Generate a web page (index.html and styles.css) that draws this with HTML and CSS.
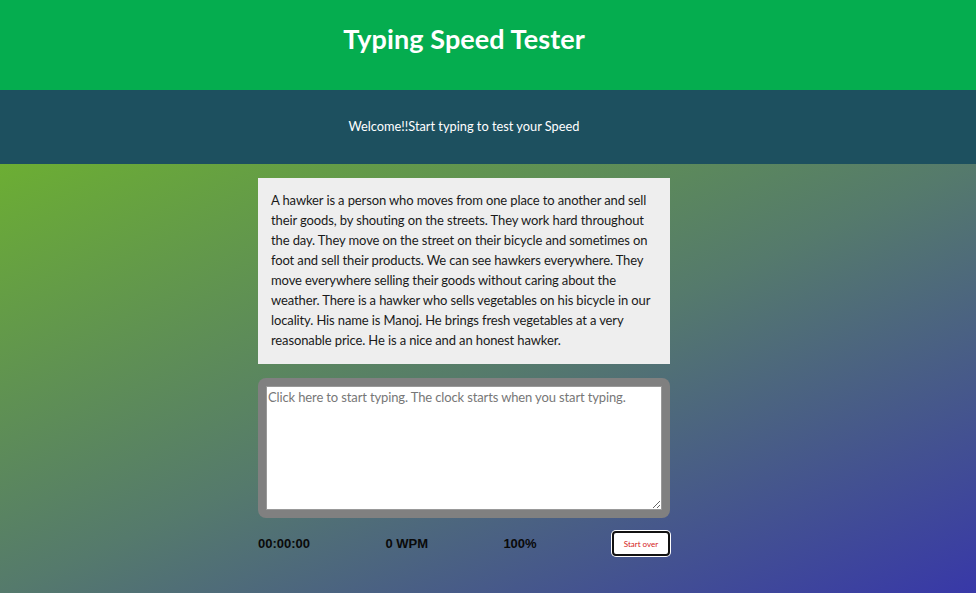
FILE: index.html
```html
<!DOCTYPE html>
<html lang="en">
<head>
<meta charset="utf-8">
<title>Typing Speed Tester</title>
<link rel="stylesheet" href="styles.css">
</head>
<body>
<header class="masthead">
  <h1 class="title">Typing Speed Tester</h1>
</header>
<section class="intro">
  <p class="intro-text">Welcome!!Start typing to test your Speed</p>
</section>
<main class="main">
  <div class="test-area">
    <div class="origin-text">
      <p>A hawker is a person who moves from one place to another and sell their goods, by shouting on the streets. They work hard throughout the day. They move on the street on their bicycle and sometimes on foot and sell their products. We can see hawkers everywhere. They move everywhere selling their goods without caring about the weather. There is a hawker who sells vegetables on his bicycle in our locality. His name is Manoj. He brings fresh vegetables at a very reasonable price. He is a nice and an honest hawker.</p>
    </div>
    <div class="text-area-wrap">
      <textarea class="test-input" placeholder="Click here to start typing. The clock starts when you start typing."></textarea>
    </div>
    <div class="meta">
      <div class="stat">00:00:00</div>
      <div class="stat">0 WPM</div>
      <div class="stat">100%</div>
      <button class="reset">Start over</button>
    </div>
  </div>
</main>
</body>
</html>
```
FILE: styles.css
```css
* { box-sizing: border-box; }
html, body { margin: 0; padding: 0; height: 100%; }
body {
  font-family: "Lato", "Open Sans", sans-serif;
  display: flex;
  flex-direction: column;
  min-height: 593px;
}
.masthead {
  background: #05ad4f;
  height: 90px;
  display: flex;
  align-items: center;
  justify-content: center;
  padding-right: 48px;
}
.title {
  margin: 0 0 13px;
  color: #ffffff;
  font-size: 27px;
  font-weight: 700;
  letter-spacing: 0.1px;
}
.intro {
  background: #1d505f;
  height: 74px;
  display: flex;
  align-items: center;
  justify-content: center;
  padding: 0 48px 2px 0;
}
.intro-text {
  margin: 0;
  color: #ffffff;
  font-size: 12.8px;
}
.main {
  flex: 1;
  background: linear-gradient(to bottom right, #6cae33 0%, #557a6c 50%, #3838a8 100%);
  display: flex;
  justify-content: center;
  padding: 14px 48px 0 0;
}
.test-area {
  width: 412px;
}
.origin-text {
  background: #eeeeee;
  padding: 12px 13px 14px;
}
.origin-text p {
  margin: 0;
  font-size: 13px;
  letter-spacing: -0.12px;
  line-height: 20px;
  color: #1a1a1a;
}
.text-area-wrap {
  margin-top: 14px;
  background: #808080;
  border-radius: 8px;
  padding: 8px;
  height: 140px;
  display: flex;
}
.test-input {
  flex: 1;
  width: 100%;
  border: 1px solid #999999;
  border-radius: 0;
  margin: 0;
  padding: 2px 1px;
  font-family: "Lato", "Open Sans", sans-serif;
  font-size: 13px;
  letter-spacing: -0.13px;
  background: #ffffff;
}
.test-input::placeholder { color: #777777; }
.meta {
  display: flex;
  align-items: center;
  justify-content: space-between;
  margin-top: 13px;
}
.stat {
  font-family: "Liberation Sans", Arial, sans-serif;
  font-weight: 700;
  font-size: 13px;
  color: #0a0a0a;
}
.reset {
  width: 58px;
  height: 25px;
  background: #ffffff;
  border: 2px solid #111111;
  border-radius: 4px;
  color: #d41a1a;
  font-family: "Lato", sans-serif;
  font-size: 8px;
  font-weight: 400;
  padding: 0;
  box-shadow: 0 0 0 1px #ffffff;
}
```
